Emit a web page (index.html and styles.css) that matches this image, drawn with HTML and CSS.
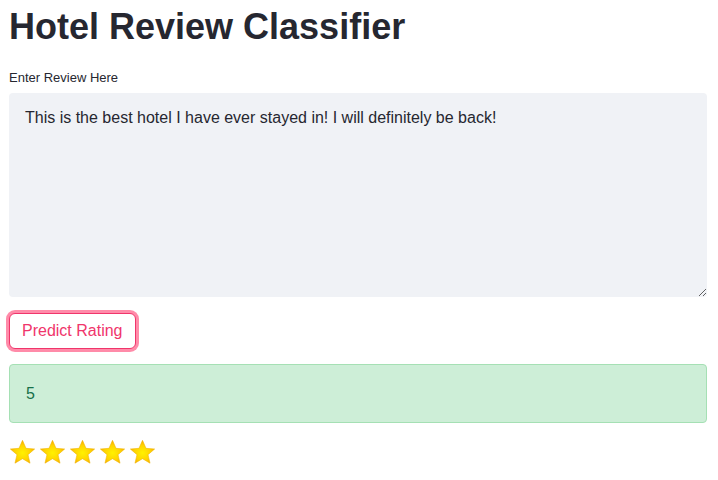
FILE: index.html
```html
<!DOCTYPE html>
<html>
<head>
<meta charset="utf-8">
<link rel="stylesheet" href="styles.css">
</head>
<body>
<main class="page">
  <h1 class="title">Hotel Review Classifier</h1>
  <label class="label" for="review">Enter Review Here</label>
  <textarea id="review" class="review">This is the best hotel I have ever stayed in! I will definitely be back!</textarea>
  <div class="actions"><button class="btn">Predict Rating</button></div>
  <div class="result">5</div>
  <div class="stars">
    <svg class="star" viewBox="0 0 24 24"><defs><radialGradient id="g" cx="50%" cy="55%" r="55%"><stop offset="0" stop-color="#fff200"/><stop offset="0.6" stop-color="#ffd400"/><stop offset="1" stop-color="#f5a800"/></radialGradient></defs><path d="M12 1.2l3.1 7.1 7.7.6-5.9 5 1.8 7.6L12 17.5l-6.7 4 1.8-7.6-5.9-5 7.7-.6z" fill="url(#g)" stroke="#f0b400" stroke-width=".5"/></svg>
    <svg class="star" viewBox="0 0 24 24"><path d="M12 1.2l3.1 7.1 7.7.6-5.9 5 1.8 7.6L12 17.5l-6.7 4 1.8-7.6-5.9-5 7.7-.6z" fill="url(#g)" stroke="#f0b400" stroke-width=".5"/></svg>
    <svg class="star" viewBox="0 0 24 24"><path d="M12 1.2l3.1 7.1 7.7.6-5.9 5 1.8 7.6L12 17.5l-6.7 4 1.8-7.6-5.9-5 7.7-.6z" fill="url(#g)" stroke="#f0b400" stroke-width=".5"/></svg>
    <svg class="star" viewBox="0 0 24 24"><path d="M12 1.2l3.1 7.1 7.7.6-5.9 5 1.8 7.6L12 17.5l-6.7 4 1.8-7.6-5.9-5 7.7-.6z" fill="url(#g)" stroke="#f0b400" stroke-width=".5"/></svg>
    <svg class="star" viewBox="0 0 24 24"><path d="M12 1.2l3.1 7.1 7.7.6-5.9 5 1.8 7.6L12 17.5l-6.7 4 1.8-7.6-5.9-5 7.7-.6z" fill="url(#g)" stroke="#f0b400" stroke-width=".5"/></svg>
  </div>
</main>
</body>
</html>
```
FILE: styles.css
```css
html, body {
  margin: 0;
  padding: 0;
  background: #ffffff;
}
body {
  font-family: "Liberation Sans", Arial, sans-serif;
  color: #262730;
}
.page {
  display: flex;
  flex-direction: column;
  align-items: stretch;
  padding: 0 11px 0 9px;
}
.title {
  margin: 5px 0 0;
  font-size: 36px;
  line-height: 44px;
  font-weight: 700;
  color: #262730;
}
.label {
  margin-top: 21px;
  font-size: 13px;
  line-height: 16px;
}
.review {
  margin-top: 7px;
  height: 204px;
  box-sizing: border-box;
  border: none;
  border-radius: 4px;
  background: #f0f2f6;
  padding: 14px 16px;
  font-family: "Liberation Sans", Arial, sans-serif;
  font-size: 16px;
  line-height: 22px;
  color: #262730;
  resize: vertical;
  outline: none;
}
.actions {
  margin-top: 16px;
  display: flex;
}
.btn {
  box-sizing: border-box;
  height: 36px;
  padding: 0 12px;
  border: 1px solid #f0356b;
  border-radius: 6px;
  background: #ffffff;
  color: #f0356b;
  font-family: "Liberation Sans", Arial, sans-serif;
  font-size: 16px;
  box-shadow: 0 0 0 3px rgba(255, 100, 140, 0.75);
}
.result {
  margin-top: 15px;
  box-sizing: border-box;
  height: 59px;
  display: flex;
  align-items: center;
  padding: 0 16px;
  background: #cdeed7;
  border: 1px solid #a5e0b4;
  border-radius: 4px;
  color: #17704a;
  font-size: 16px;
}
.stars {
  margin-top: 16px;
  display: flex;
  gap: 3px;
}
.star {
  width: 27px;
  height: 27px;
}
```
